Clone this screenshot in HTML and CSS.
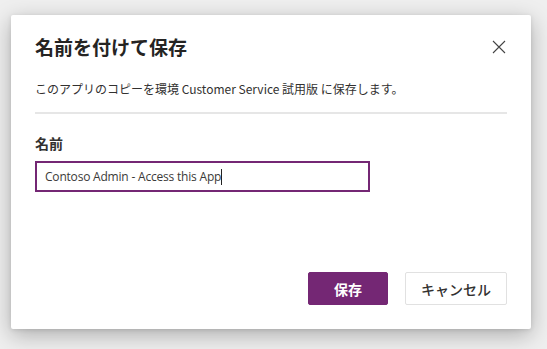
FILE: index.html
```html
<!DOCTYPE html>
<html lang="ja">
<head>
<meta charset="utf-8">
<link rel="stylesheet" href="styles.css">
</head>
<body>
<div class="dialog">
  <div class="header">
    <h1 class="title">名前を付けて保存</h1>
    <button class="close" aria-label="閉じる">
      <svg width="14" height="14" viewBox="0 0 14 14"><path d="M1 1L13 13M13 1L1 13" stroke="#444" stroke-width="1.1" fill="none"/></svg>
    </button>
  </div>
  <p class="desc">このアプリのコピーを環境 Customer Service 試用版 に保存します。</p>
  <div class="divider"></div>
  <label class="label">名前</label>
  <div class="input"><span class="value">Contoso Admin - Access this App</span><span class="caret"></span></div>
  <div class="footer">
    <button class="btn primary">保存</button>
    <button class="btn secondary">キャンセル</button>
  </div>
</div>
</body>
</html>
```
FILE: styles.css
```css
html, body {
  margin: 0;
  padding: 0;
}
body {
  width: 547px;
  height: 349px;
  background: #efefef;
  font-family: "Noto Sans CJK JP", "Noto Sans", sans-serif;
  color: #323130;
  overflow: hidden;
  padding: 15px 0 0 11px;
  box-sizing: border-box;
}
.dialog {
  width: 520px;
  height: 314px;
  background: #fff;
  border-radius: 2px;
  box-shadow: 0 6px 22px rgba(0,0,0,0.28), 0 1px 4px rgba(0,0,0,0.1);
  box-sizing: border-box;
  padding: 0 24px 0 24px;
  display: flex;
  flex-direction: column;
}
.header {
  display: flex;
  justify-content: space-between;
  align-items: center;
  height: 62px;
}
.title {
  margin: 0;
  font-size: 19px;
  font-weight: 700;
  color: #252423;
  line-height: 28px;
  padding-top: 2px;
}
.close {
  border: 0;
  background: none;
  padding: 0;
  width: 14px;
  height: 14px;
  margin-right: 1px;
  margin-top: 2px;
  display: flex;
}
.desc {
  margin: 0;
  margin-top: 2px;
  font-size: 12px;
  line-height: 20px;
  color: #323130;
}
.divider {
  height: 2px;
  background: #e6e6e6;
  margin-top: 13px;
}
.label {
  font-size: 14px;
  font-weight: 700;
  margin-top: 19px;
  line-height: 20px;
}
.input {
  margin-top: 8px;
  width: 335px;
  height: 31px;
  box-sizing: border-box;
  border: 2px solid #742774;
  display: flex;
  align-items: center;
  padding-left: 8px;
  font-family: "Open Sans", "Noto Sans", sans-serif;
  font-size: 12px;
  letter-spacing: -0.2px;
  color: #3b3a39;
}
.caret {
  width: 1px;
  height: 16px;
  background: #222;
}
.footer {
  margin-top: auto;
  margin-bottom: 24px;
  display: flex;
  justify-content: flex-end;
  gap: 17px;
}
.btn {
  height: 33px;
  border-radius: 2px;
  font-family: "Noto Sans CJK JP", sans-serif;
  font-size: 14px;
  font-weight: 700;
  padding: 0;
}
.primary {
  width: 80px;
  background: #742774;
  border: 1px solid #742774;
  color: #fff;
}
.secondary {
  width: 102px;
  background: #fff;
  border: 1px solid #e1e1e1;
  color: #323130;
  font-weight: 500;
}
```
